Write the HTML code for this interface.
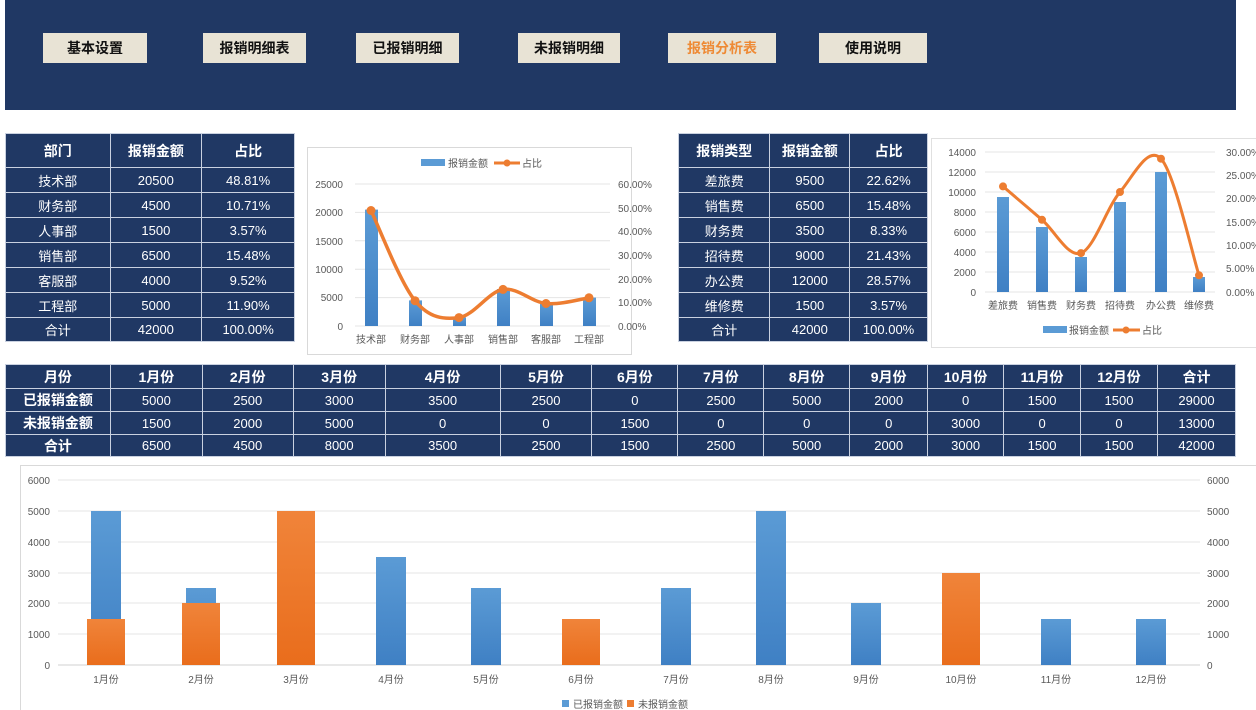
<!DOCTYPE html>
<html><head><meta charset="utf-8"><style>
*{margin:0;padding:0;box-sizing:border-box}
body{width:1256px;height:710px;background:#fff;position:relative;overflow:hidden;font-family:"Liberation Sans","Noto Sans CJK SC",sans-serif}
.band{position:absolute;left:5px;top:0;width:1231px;height:110px;background:#203864}
.btn{position:absolute;top:33px;height:30px;background:#e8e3d5;color:#111;font-weight:bold;font-size:14px;text-align:center;line-height:30px}
table{position:absolute;border-collapse:collapse;background:#203864;color:#fff;font-size:13px;text-align:center}
td,th{border:1px solid #c9d1e0;padding:0}
th{font-weight:bold;font-size:14px}
svg{position:absolute;left:0;top:0}
</style></head><body>
<div class="band"></div>
<div class="btn" style="left:43px;width:104px">基本设置</div>
<div class="btn" style="left:203px;width:103px">报销明细表</div>
<div class="btn" style="left:356px;width:103px">已报销明细</div>
<div class="btn" style="left:518px;width:102px">未报销明细</div>
<div class="btn" style="left:668px;width:108px;color:#ee8a35">报销分析表</div>
<div class="btn" style="left:819px;width:108px">使用说明</div>

<table style="left:5px;top:133px;width:290px">
<colgroup><col style="width:105px"><col style="width:92px"><col style="width:93px"></colgroup>
<tr style="height:34px"><th>部门</th><th>报销金额</th><th>占比</th></tr>
<tr style="height:25px"><td>技术部</td><td>20500</td><td>48.81%</td></tr>
<tr style="height:25px"><td>财务部</td><td>4500</td><td>10.71%</td></tr>
<tr style="height:25px"><td>人事部</td><td>1500</td><td>3.57%</td></tr>
<tr style="height:25px"><td>销售部</td><td>6500</td><td>15.48%</td></tr>
<tr style="height:25px"><td>客服部</td><td>4000</td><td>9.52%</td></tr>
<tr style="height:25px"><td>工程部</td><td>5000</td><td>11.90%</td></tr>
<tr style="height:24px"><td>合计</td><td>42000</td><td>100.00%</td></tr>
</table>

<table style="left:678px;top:133px;width:250px">
<colgroup><col style="width:92px"><col style="width:80px"><col style="width:78px"></colgroup>
<tr style="height:34px"><th>报销类型</th><th>报销金额</th><th>占比</th></tr>
<tr style="height:25px"><td>差旅费</td><td>9500</td><td>22.62%</td></tr>
<tr style="height:25px"><td>销售费</td><td>6500</td><td>15.48%</td></tr>
<tr style="height:25px"><td>财务费</td><td>3500</td><td>8.33%</td></tr>
<tr style="height:25px"><td>招待费</td><td>9000</td><td>21.43%</td></tr>
<tr style="height:25px"><td>办公费</td><td>12000</td><td>28.57%</td></tr>
<tr style="height:25px"><td>维修费</td><td>1500</td><td>3.57%</td></tr>
<tr style="height:24px"><td>合计</td><td>42000</td><td>100.00%</td></tr>
</table>

<table style="left:5px;top:364px;width:1231px">
<colgroup><col style="width:105px"><col style="width:92px"><col style="width:91px"><col style="width:92px"><col style="width:115px"><col style="width:92px"><col style="width:86px"><col style="width:86px"><col style="width:86px"><col style="width:78px"><col style="width:76px"><col style="width:77px"><col style="width:77px"><col style="width:78px"></colgroup>
<tr style="height:24px"><th>月份</th><th>1月份</th><th>2月份</th><th>3月份</th><th>4月份</th><th>5月份</th><th>6月份</th><th>7月份</th><th>8月份</th><th>9月份</th><th>10月份</th><th>11月份</th><th>12月份</th><th>合计</th></tr>
<tr style="height:23px"><th>已报销金额</th><td>5000</td><td>2500</td><td>3000</td><td>3500</td><td>2500</td><td>0</td><td>2500</td><td>5000</td><td>2000</td><td>0</td><td>1500</td><td>1500</td><td>29000</td></tr>
<tr style="height:23px"><th>未报销金额</th><td>1500</td><td>2000</td><td>5000</td><td>0</td><td>0</td><td>1500</td><td>0</td><td>0</td><td>0</td><td>3000</td><td>0</td><td>0</td><td>13000</td></tr>
<tr style="height:22px"><th>合计</th><td>6500</td><td>4500</td><td>8000</td><td>3500</td><td>2500</td><td>1500</td><td>2500</td><td>5000</td><td>2000</td><td>3000</td><td>1500</td><td>1500</td><td>42000</td></tr>
</table>

<svg width="1256" height="710" font-family="Liberation Sans,Noto Sans CJK SC,sans-serif" font-size="10" fill="#595959">
<defs>
<linearGradient id="bg" x1="0" y1="0" x2="0" y2="1"><stop offset="0" stop-color="#5b9bd5"/><stop offset="1" stop-color="#3f80c4"/></linearGradient>
<linearGradient id="og" x1="0" y1="0" x2="0" y2="1"><stop offset="0" stop-color="#f0843a"/><stop offset="1" stop-color="#e96d1c"/></linearGradient>
</defs>
<!-- chart 1 -->
<rect x="307.5" y="147.5" width="324" height="207" fill="#fff" stroke="#d9d9d9"/>
<g stroke="#e4e4e4"><line x1="355" x2="610" y1="184" y2="184"/><line x1="355" x2="610" y1="212.4" y2="212.4"/><line x1="355" x2="610" y1="240.8" y2="240.8"/><line x1="355" x2="610" y1="269.2" y2="269.2"/><line x1="355" x2="610" y1="297.6" y2="297.6"/><line x1="355" x2="610" y1="326" y2="326"/></g>
<g text-anchor="end"><text x="343" y="188">25000</text><text x="343" y="216">20000</text><text x="343" y="245">15000</text><text x="343" y="273">10000</text><text x="343" y="301">5000</text><text x="343" y="330">0</text></g>
<g><text x="618" y="188">60.00%</text><text x="618" y="212">50.00%</text><text x="618" y="235">40.00%</text><text x="618" y="259">30.00%</text><text x="618" y="283">20.00%</text><text x="618" y="306">10.00%</text><text x="618" y="330">0.00%</text></g>
<g fill="url(#bg)"><rect x="365" y="209.6" width="13" height="116.4"/><rect x="409" y="300.4" width="13" height="25.6"/><rect x="453" y="317.5" width="13" height="8.5"/><rect x="497" y="289" width="13" height="37"/><rect x="540" y="303.3" width="13" height="22.7"/><rect x="583" y="297.6" width="13" height="28.4"/></g>
<path d="M371,210.5 C378.3,225.5 400.3,282.9 415,300.7 C429.7,318.6 444.3,319.5 459,317.6 C473.7,315.7 488.5,291.8 503,289.4 C517.5,287.1 531.7,302.1 546,303.5 C560.3,304.9 581.8,298.8 589,297.8" fill="none" stroke="#ed7d31" stroke-width="3.5"/>
<g fill="#ed7d31"><circle cx="371" cy="210.5" r="4.5"/><circle cx="415" cy="300.7" r="4.5"/><circle cx="459" cy="317.6" r="4.5"/><circle cx="503" cy="289.4" r="4.5"/><circle cx="546" cy="303.5" r="4.5"/><circle cx="589" cy="297.8" r="4.5"/></g>
<g text-anchor="middle"><text x="371" y="343">技术部</text><text x="415" y="343">财务部</text><text x="459" y="343">人事部</text><text x="503" y="343">销售部</text><text x="546" y="343">客服部</text><text x="589" y="343">工程部</text></g>
<rect x="421" y="159" width="24" height="7" fill="#5b9bd5"/><text x="448" y="167">报销金额</text>
<line x1="494" x2="520" y1="163" y2="163" stroke="#ed7d31" stroke-width="3"/><circle cx="507" cy="163" r="3.5" fill="#ed7d31"/><text x="522" y="167">占比</text>

<!-- chart 2 -->
<rect x="931.5" y="138.5" width="330" height="209" fill="#fff" stroke="#e0e0e0"/>
<g stroke="#e4e4e4"><line x1="985" x2="1215" y1="152" y2="152"/><line x1="985" x2="1215" y1="172" y2="172"/><line x1="985" x2="1215" y1="192" y2="192"/><line x1="985" x2="1215" y1="212" y2="212"/><line x1="985" x2="1215" y1="232" y2="232"/><line x1="985" x2="1215" y1="252" y2="252"/><line x1="985" x2="1215" y1="272" y2="272"/><line x1="985" x2="1215" y1="292" y2="292"/></g>
<g text-anchor="end"><text x="976" y="156">14000</text><text x="976" y="176">12000</text><text x="976" y="196">10000</text><text x="976" y="216">8000</text><text x="976" y="236">6000</text><text x="976" y="256">4000</text><text x="976" y="276">2000</text><text x="976" y="296">0</text></g>
<g><text x="1226" y="156">30.00%</text><text x="1226" y="179">25.00%</text><text x="1226" y="202">20.00%</text><text x="1226" y="226">15.00%</text><text x="1226" y="249">10.00%</text><text x="1226" y="272">5.00%</text><text x="1226" y="296">0.00%</text></g>
<g fill="url(#bg)"><rect x="997" y="197" width="12" height="95"/><rect x="1036" y="227" width="12" height="65"/><rect x="1075" y="257" width="12" height="35"/><rect x="1114" y="202" width="12" height="90"/><rect x="1155" y="172" width="12" height="120"/><rect x="1193" y="277" width="12" height="15"/></g>
<path d="M1003,186.4 C1009.5,192 1029,208.7 1042,219.8 C1055,230.9 1068,257.7 1081,253.1 C1094,248.5 1106.7,207.7 1120,192 C1133.3,176.3 1147.8,144.8 1161,158.7 C1174.2,172.6 1192.7,255.9 1199,275.3" fill="none" stroke="#ed7d31" stroke-width="3"/>
<g fill="#ed7d31"><circle cx="1003" cy="186.4" r="4"/><circle cx="1042" cy="219.8" r="4"/><circle cx="1081" cy="253.1" r="4"/><circle cx="1120" cy="192" r="4"/><circle cx="1161" cy="158.7" r="4"/><circle cx="1199" cy="275.3" r="4"/></g>
<g text-anchor="middle"><text x="1003" y="309">差旅费</text><text x="1042" y="309">销售费</text><text x="1081" y="309">财务费</text><text x="1120" y="309">招待费</text><text x="1161" y="309">办公费</text><text x="1199" y="309">维修费</text></g>
<rect x="1043" y="326" width="24" height="7" fill="#5b9bd5"/><text x="1069" y="334">报销金额</text>
<line x1="1113" x2="1140" y1="330" y2="330" stroke="#ed7d31" stroke-width="3"/><circle cx="1126" cy="330" r="3.5" fill="#ed7d31"/><text x="1142" y="334">占比</text>

<!-- bottom chart -->
<rect x="20.5" y="465.5" width="1240" height="250" fill="#fff" stroke="#d9d9d9"/>
<g stroke="#e4e4e4"><line x1="58" x2="1200" y1="480" y2="480"/><line x1="58" x2="1200" y1="511" y2="511"/><line x1="58" x2="1200" y1="542" y2="542"/><line x1="58" x2="1200" y1="573" y2="573"/><line x1="58" x2="1200" y1="603" y2="603"/><line x1="58" x2="1200" y1="634" y2="634"/><line x1="58" x2="1200" y1="665" y2="665" stroke="#d0d0d0"/></g>
<g text-anchor="end"><text x="50" y="484">6000</text><text x="50" y="515">5000</text><text x="50" y="546">4000</text><text x="50" y="577">3000</text><text x="50" y="607">2000</text><text x="50" y="638">1000</text><text x="50" y="669">0</text></g>
<g><text x="1207" y="484">6000</text><text x="1207" y="515">5000</text><text x="1207" y="546">4000</text><text x="1207" y="577">3000</text><text x="1207" y="607">2000</text><text x="1207" y="638">1000</text><text x="1207" y="669">0</text></g>
<g fill="url(#bg)">
<rect x="91" y="511" width="30" height="154"/><rect x="186" y="588" width="30" height="77"/><rect x="281" y="573" width="30" height="92"/><rect x="376" y="557" width="30" height="108"/><rect x="471" y="588" width="30" height="77"/><rect x="661" y="588" width="30" height="77"/><rect x="756" y="511" width="30" height="154"/><rect x="851" y="603" width="30" height="62"/><rect x="1041" y="619" width="30" height="46"/><rect x="1136" y="619" width="30" height="46"/>
</g>
<g fill="url(#og)">
<rect x="87" y="619" width="38" height="46"/><rect x="182" y="603" width="38" height="62"/><rect x="277" y="511" width="38" height="154"/><rect x="562" y="619" width="38" height="46"/><rect x="942" y="573" width="38" height="92"/>
</g>
<g text-anchor="middle"><text x="106" y="683">1月份</text><text x="201" y="683">2月份</text><text x="296" y="683">3月份</text><text x="391" y="683">4月份</text><text x="486" y="683">5月份</text><text x="581" y="683">6月份</text><text x="676" y="683">7月份</text><text x="771" y="683">8月份</text><text x="866" y="683">9月份</text><text x="961" y="683">10月份</text><text x="1056" y="683">11月份</text><text x="1151" y="683">12月份</text></g>
<rect x="562" y="700" width="7" height="7" fill="#5b9bd5"/><text x="573" y="708">已报销金额</text>
<rect x="627" y="700" width="7" height="7" fill="#ed7d31"/><text x="638" y="708">未报销金额</text>
</svg>
</body></html>
